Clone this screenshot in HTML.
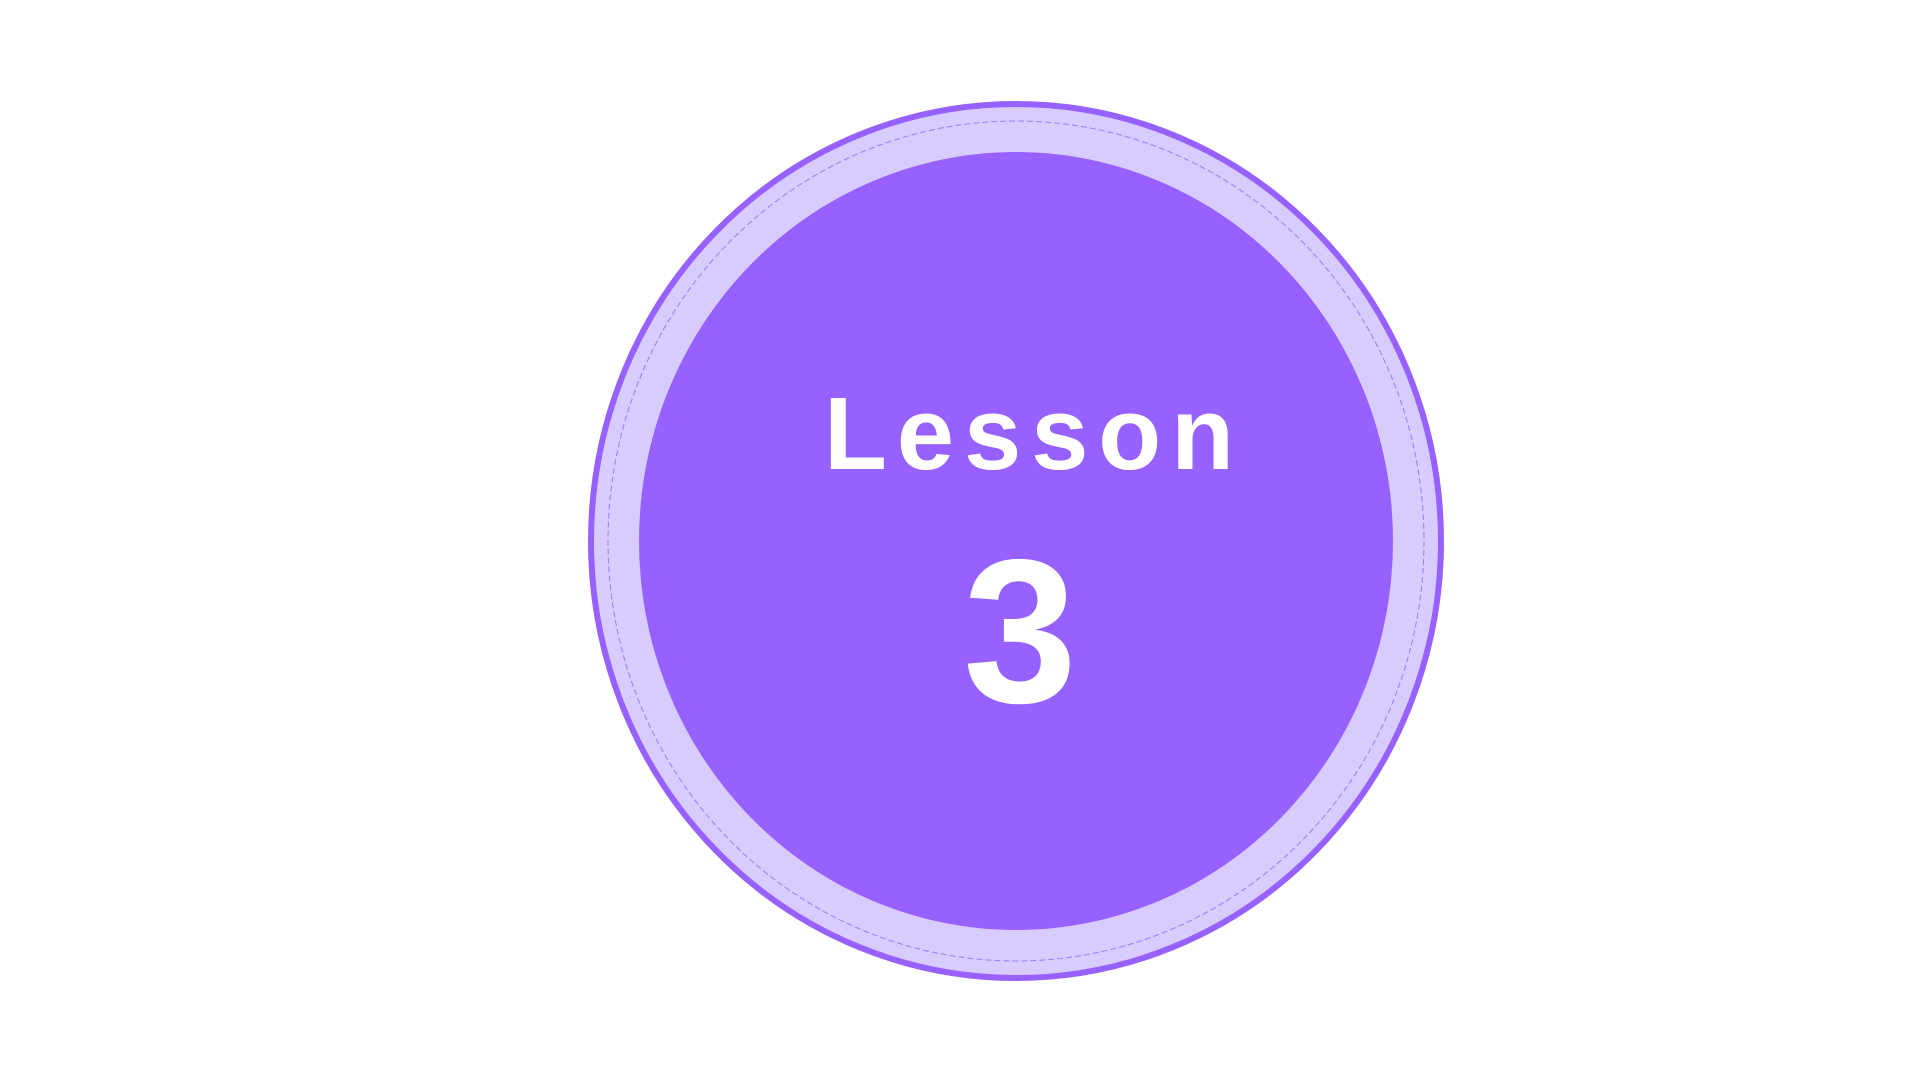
<!DOCTYPE html>
<html><head><meta charset="utf-8"><style>
html,body{margin:0;padding:0;background:#fff;width:1920px;height:1080px;overflow:hidden}
</style></head><body>
<svg width="1920" height="1080" viewBox="0 0 1920 1080" xmlns="http://www.w3.org/2000/svg">
<ellipse cx="1016" cy="541" rx="425" ry="437" fill="#d8ccff" stroke="#9661ff" stroke-width="6"/>
<ellipse cx="1016" cy="541" rx="408" ry="420" fill="none" stroke="#9661ff" stroke-width="1" stroke-dasharray="6 3" opacity="0.8"/>
<ellipse cx="1016" cy="541" rx="377" ry="389" fill="#9661ff"/>
<text x="824" y="469" textLength="410" lengthAdjust="spacing" font-family="Liberation Sans, sans-serif" font-weight="bold" font-size="103" fill="#fff">Lesson</text>
<text x="1020" y="702" text-anchor="middle" font-family="Liberation Sans, sans-serif" font-weight="bold" font-size="205" fill="#fff">3</text>
</svg>
</body></html>
